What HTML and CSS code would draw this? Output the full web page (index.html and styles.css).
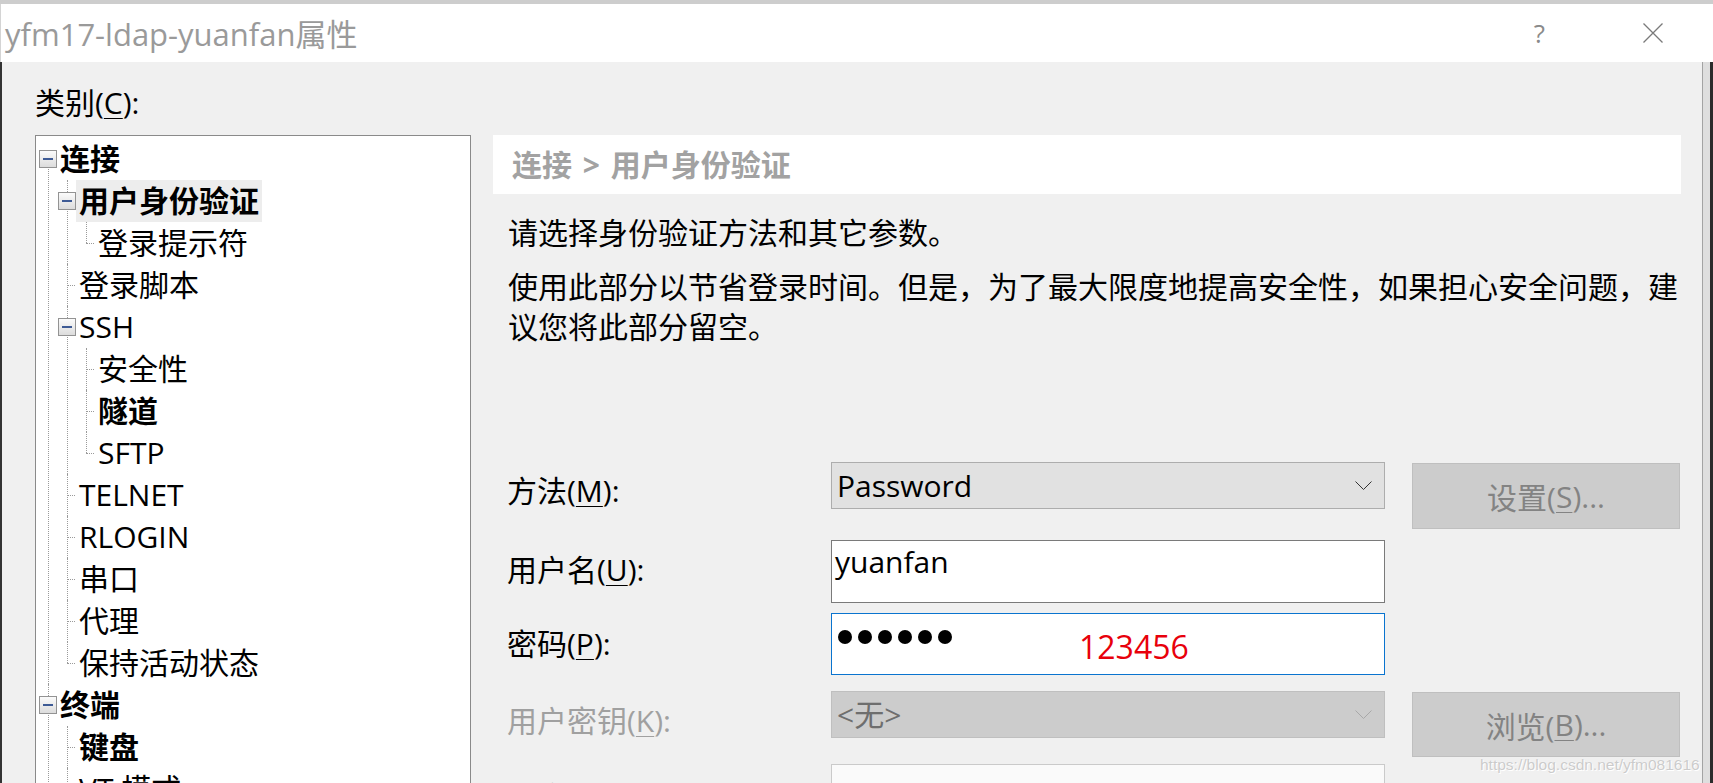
FILE: index.html
```html
<!DOCTYPE html>
<html lang="zh-CN">
<head>
<meta charset="utf-8">
<title>yfm17-ldap-yuanfan属性</title>
<link rel="stylesheet" href="styles.css">
</head>
<body>
<div class="screen">
  <div class="topstrip"></div>
  <div class="titlebar">
    <div class="title">yfm17-ldap-yuanfan属性</div>
    <div class="title-actions">
      <span class="help">?</span>
      <svg class="close" width="20" height="20" viewBox="0 0 20 20"><path d="M0.5 0.5 L19.5 19.5 M19.5 0.5 L0.5 19.5" stroke="#7a7a7a" stroke-width="1.3" fill="none"/></svg>
    </div>
  </div>
  <div class="body-row">
    <div class="edge-left"></div>
    <div class="client">
      <div class="left">
        <div class="cat-label">类别(<u>C</u>):</div>
        <div class="tree">
          <ul class="root">
            <li class="first">
              <div class="node"><span class="exp"></span><span class="lbl b">连接</span></div>
              <ul>
                <li>
                  <div class="node"><span class="exp"></span><span class="lbl b sel">用户身份验证</span></div>
                  <ul>
                    <li class="last"><div class="node leaf"><span class="lbl">登录提示符</span></div></li>
                  </ul>
                </li>
                <li><div class="node leaf"><span class="lbl">登录脚本</span></div></li>
                <li>
                  <div class="node"><span class="exp"></span><span class="lbl">SSH</span></div>
                  <ul>
                    <li><div class="node leaf"><span class="lbl">安全性</span></div></li>
                    <li><div class="node leaf"><span class="lbl b">隧道</span></div></li>
                    <li class="last"><div class="node leaf"><span class="lbl">SFTP</span></div></li>
                  </ul>
                </li>
                <li><div class="node leaf"><span class="lbl">TELNET</span></div></li>
                <li><div class="node leaf"><span class="lbl">RLOGIN</span></div></li>
                <li><div class="node leaf"><span class="lbl">串口</span></div></li>
                <li><div class="node leaf"><span class="lbl">代理</span></div></li>
                <li class="last"><div class="node leaf"><span class="lbl">保持活动状态</span></div></li>
              </ul>
            </li>
            <li>
              <div class="node"><span class="exp"></span><span class="lbl b">终端</span></div>
              <ul>
                <li><div class="node leaf"><span class="lbl b">键盘</span></div></li>
                <li><div class="node leaf"><span class="lbl">VT 模式</span></div></li>
                <li><div class="node leaf"><span class="lbl">Emacs</span></div></li>
                <li><div class="node leaf"><span class="lbl">映射键</span></div></li>
                <li class="last"><div class="node leaf"><span class="lbl">高级</span></div></li>
              </ul>
            </li>
            <li><div class="node leaf"><span class="lbl">外观</span></div></li>
            <li><div class="node leaf"><span class="lbl">日志文件</span></div></li>
            <li class="last"><div class="node leaf"><span class="lbl">文件传输</span></div></li>
          </ul>
        </div>
      </div>

      <div class="panel">
        <div class="crumb">连接 &gt; 用户身份验证</div>
        <p class="desc first-desc">请选择身份验证方法和其它参数。</p>
        <p class="desc">使用此部分以节省登录时间。但是，为了最大限度地提高安全性，如果担心安全问题，建议您将此部分留空。</p>

        <div class="form">
          <div class="row row-method">
            <div class="flabel">方法(<u>M</u>):</div>
            <div class="select">
              <span class="sel-text">Password</span>
              <svg class="chev" width="17" height="9" viewBox="0 0 17 9"><path d="M0.5 0.5 L8.5 8.5 L16.5 0.5" stroke="#333" stroke-width="1" fill="none"/></svg>
            </div>
            <div class="btn">设置(<u>S</u>)...</div>
          </div>
          <div class="row row-user">
            <div class="flabel">用户名(<u>U</u>):</div>
            <div class="input input-user">yuanfan</div>
            <div></div>
          </div>
          <div class="row row-pass">
            <div class="flabel">密码(<u>P</u>):</div>
            <div class="input input-pass">
              <span class="dots"><i></i><i></i><i></i><i></i><i></i><i></i></span>
              <span class="note">123456</span>
            </div>
            <div></div>
          </div>
          <div class="row row-key">
            <div class="flabel disabled">用户密钥(<u>K</u>):</div>
            <div class="select select-off">
              <span class="sel-text">&lt;无&gt;</span>
              <svg class="chev" width="17" height="9" viewBox="0 0 17 9"><path d="M0.5 0.5 L8.5 8.5 L16.5 0.5" stroke="#a8a8a8" stroke-width="1" fill="none"/></svg>
            </div>
            <div class="btn btn-browse">浏览(<u>B</u>)...</div>
          </div>
          <div class="row row-phrase">
            <div class="flabel disabled">口令(<u>W</u>):</div>
            <div class="input input-off"></div>
            <div></div>
          </div>
        </div>
      </div>
    </div>
    <div class="edge-right"></div>
  </div>
  <div class="watermark">https://blog.csdn.net/yfm081616</div>
</div>
</body>
</html>
```

FILE: styles.css
```css
* { box-sizing: border-box; }
html, body { margin: 0; padding: 0; }
body {
  width: 1713px;
  height: 783px;
  overflow: hidden;
  background: #2b2b2b;
  font-family: "Open Sans", "Noto Sans CJK SC", sans-serif;
  color: #000;
}
.screen {
  position: relative;
  width: 1713px;
  height: 783px;
  overflow: hidden;
  background: #2b2b2b;
}
.topstrip { height: 4px; background: #cdcdcd; }
.titlebar {
  height: 58px;
  background: #fff;
  border-left: 1px solid #d4d4d4;
  display: flex;
  align-items: center;
  padding-left: 4px;
}
.title {
  font-size: 31px;
  line-height: 40px;
  color: #9a9a9a;
  padding-top: 2px;
}
.title-actions {
  margin-left: auto;
  display: flex;
  align-items: center;
}
.help {
  font-size: 26px;
  line-height: 30px;
  color: #8a8a8a;
  margin-right: 98px;
}
.close { display: block; margin-right: 50px; }

.body-row { display: flex; height: 721px; }
.edge-left { width: 2px; background: #333; }
.client {
  width: 1701px;
  background: #f0f0f0;
  border-right: 1px solid #a3a3a3;
  display: flex;
  align-items: flex-start;
}
.edge-right { width: 7px; background: #dedede; }

/* left column */
.left { width: 469px; padding-left: 33px; padding-top: 20px; }
.cat-label { font-size: 30px; line-height: 42px; margin-bottom: 11px; }
u { text-decoration-thickness: 1px; text-underline-offset: 4px; }

.tree {
  width: 436px;
  height: 680px;
  background: #fff;
  border: 1px solid #8a8a8a;
  padding-top: 2px;
  overflow: hidden;
}
.tree ul { list-style: none; margin: 0; padding: 0; }
.tree ul ul { padding-left: 19px; }
.tree li { position: relative; }
.tree li::before {
  content: "";
  position: absolute;
  left: 12px;
  top: 0;
  bottom: 0;
  border-left: 1px dotted #9a9a9a;
}
.tree li.first::before { top: 21px; }
.tree li.last::before { bottom: auto; height: 21px; }
.tree li::after {
  content: "";
  position: absolute;
  left: 12px;
  top: 21px;
  width: 8px;
  border-top: 1px dotted #9a9a9a;
}
.node {
  position: relative;
  z-index: 1;
  display: flex;
  align-items: center;
  height: 42px;
  padding-left: 3px;
}
.node.leaf { padding-left: 21px; }
.exp {
  position: relative;
  width: 18px;
  height: 18px;
  border: 1px solid #939393;
  background: linear-gradient(#fbfbfb, #dcdcdc);
  flex: none;
}
.exp::after {
  content: "";
  position: absolute;
  left: 3px;
  top: 7px;
  width: 10px;
  height: 2px;
  background: #3e5b95;
}
.lbl {
  font-size: 30px;
  line-height: 42px;
  padding: 0 3px;
  white-space: nowrap;
}
.lbl.b { font-weight: 700; }
.lbl.sel { background: #ededed; }

/* right panel */
.panel { width: 1188px; margin-left: 22px; padding-top: 73px; }
.crumb {
  height: 59px;
  background: #fff;
  padding-left: 19px;
  font-size: 30px;
  line-height: 59px;
  font-weight: 700;
  color: #a2a2a2;
  word-spacing: 3px;
}
.desc {
  margin: 14px 0 0 0;
  padding-left: 15px;
  font-size: 30px;
  line-height: 40px;
}
.desc.first-desc { margin-top: 19px; }

.form { margin-top: 115px; padding-left: 14px; }
.row {
  display: grid;
  grid-template-columns: 297px 554px 268px;
  column-gap: 27px;
  align-items: start;
}
.flabel { font-size: 30px; line-height: 42px; white-space: nowrap; }
.flabel.disabled { color: #a0a0a0; }

.row-method .flabel { margin-top: 8px; }
.row-user { margin-top: 11px; }
.row-user .flabel { margin-top: 9px; }
.row-pass { margin-top: 10px; }
.row-pass .flabel { margin-top: 10px; }
.row-key { margin-top: 16px; }
.row-key .flabel { margin-top: 9px; }
.row-phrase { margin-top: 7px; }
.row-phrase .flabel { margin-top: 12px; }

.select {
  height: 47px;
  border: 1px solid #adadad;
  background: #e1e1e1;
  display: flex;
  align-items: center;
  justify-content: space-between;
  padding: 0 12px 0 5px;
}
.sel-text { font-size: 30px; line-height: 45px; }
.select-off { background: #cccccc; border-color: #bfbfbf; }
.select-off .sel-text { color: #6e6e6e; }
.chev { display: block; }

.btn {
  margin-top: 1px;
  height: 66px;
  border: 1px solid #bfbfbf;
  background: #cccccc;
  color: #838383;
  font-size: 30px;
  display: flex;
  align-items: center;
  justify-content: center;
}
.btn-browse { height: 65px; }

.input {
  position: relative;
  height: 63px;
  border: 1px solid #7a7a7a;
  background: #fff;
  padding-left: 3px;
  font-size: 30px;
  line-height: 42px;
}
.input-pass { height: 62px; border-color: #0a74cf; padding-left: 6px; }
.input-off { border-color: #cacaca; background: #fafafa; }
.dots { display: flex; gap: 6px; padding-top: 16px; }
.dots i {
  display: block;
  width: 14px;
  height: 14px;
  border-radius: 50%;
  background: #000;
}
.note {
  position: absolute;
  left: 247px;
  top: 17px;
  font-size: 32px;
  line-height: 32px;
  color: #e8000b;
}

.watermark {
  position: absolute;
  left: 1480px;
  top: 756px;
  font-family: "Liberation Sans", sans-serif;
  font-size: 15.5px;
  line-height: 18px;
  color: #cbcbcb;
  text-shadow: 0 0 1px #fff, 1px 1px 0 #fff;
  white-space: nowrap;
}
```
